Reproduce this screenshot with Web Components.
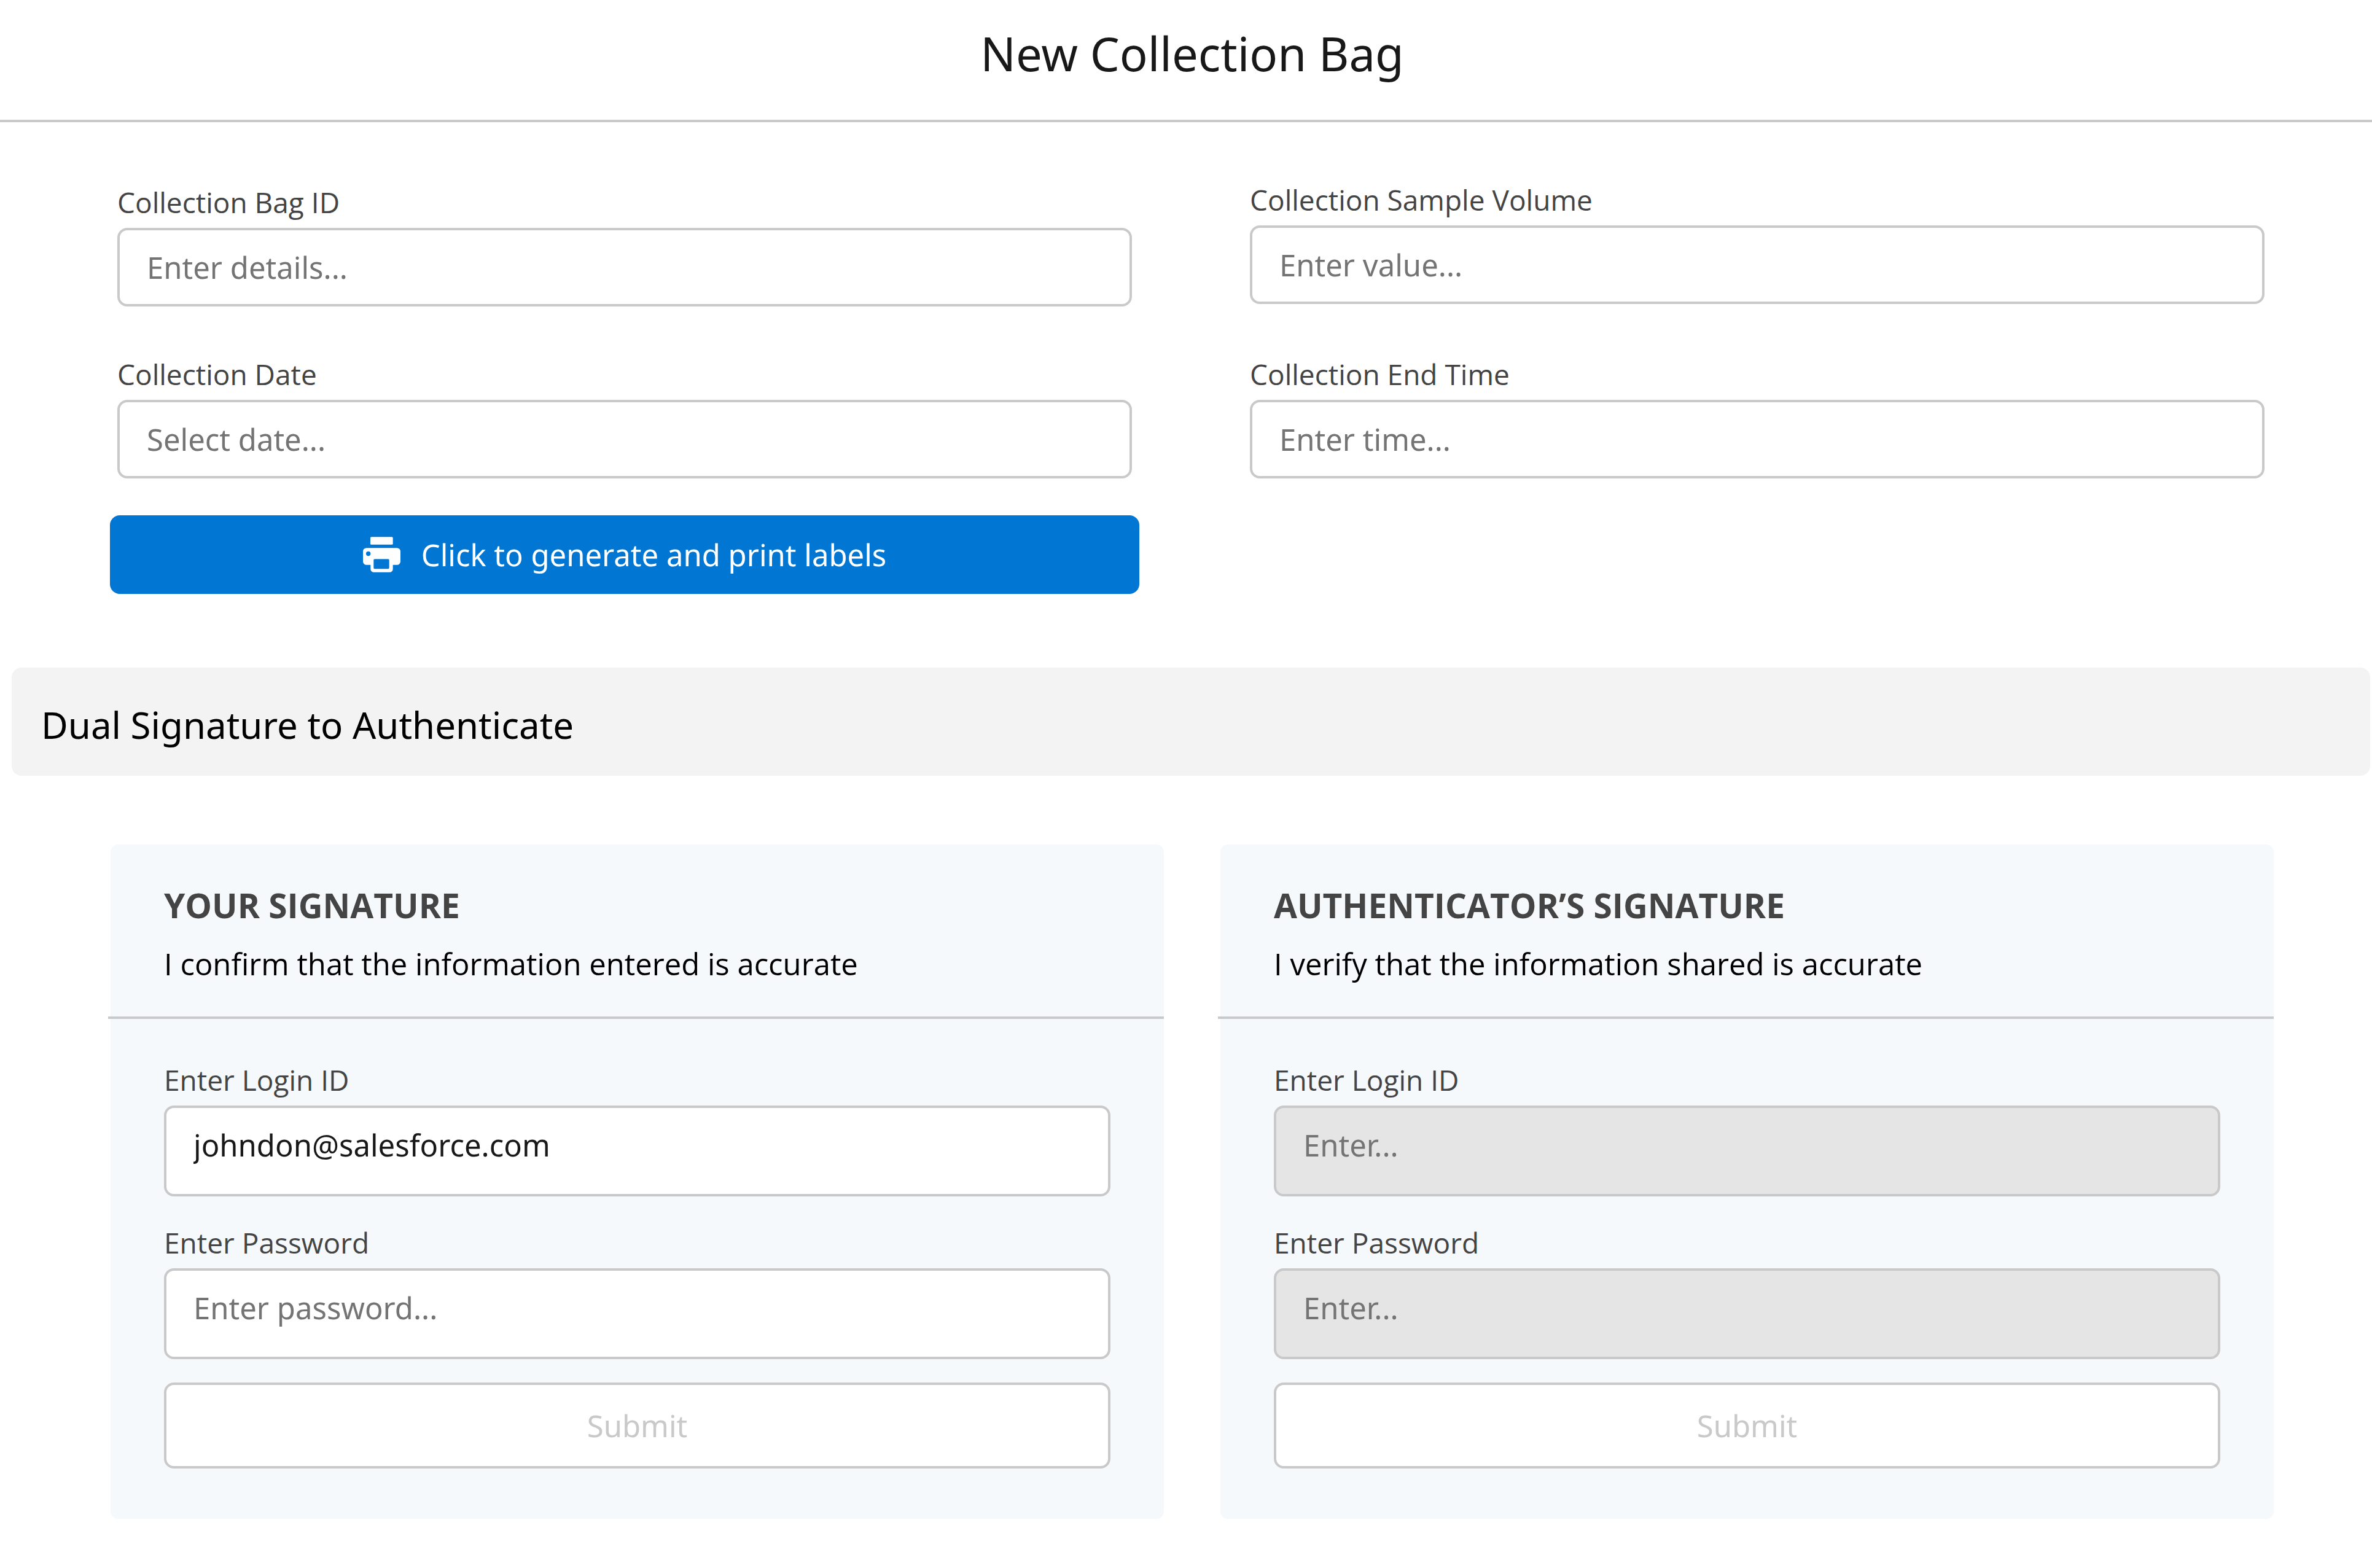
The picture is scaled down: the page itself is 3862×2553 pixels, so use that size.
<!DOCTYPE html>
<html lang="en">
<head>
<meta charset="utf-8">
<title>New Collection Bag</title>
<style>
  :root {
    --font-ui: "Noto Sans", "Open Sans", sans-serif;
    --font-label: "Open Sans", "Noto Sans", sans-serif;
    --line: #c9c9c9;
    --ink: #181818;
    --label: #444444;
    --hint: #747474;
    --brand: #0176d3;
    --radius: 16px;
  }
  body { margin: 0; background: #fff; font-family: var(--font-ui); color: var(--ink); }
</style>
</head>
<body>
<collection-page></collection-page>

<template id="page-header">
  <style>
    :host { display: block; border-bottom: 4px solid var(--line); }
    h1 { margin: 0; padding: 32px 0 53px 20px; font-size: 76px; line-height: 110px; font-weight: 400; text-align: center; }
  </style>
  <h1><slot></slot></h1>
</template>

<template id="form-field">
  <style>
    :host { display: flex; flex-direction: column; gap: 10px; }
    label { font-family: var(--font-label); font-size: 46px; line-height: 64px; color: var(--label); }
    input {
      box-sizing: border-box; width: 100%; height: 128px; margin: 0; padding: 0 44px;
      border: 4px solid var(--line); border-radius: var(--radius); background: #fff;
      font-family: var(--font-ui); font-size: 49px; color: var(--ink); outline: none;
    }
    :host([tall]) input { height: 148px; padding-bottom: 20px; }
    input::placeholder { color: var(--hint); opacity: 1; }
    input:disabled { background: #e5e5e5; }
  </style>
  <label for="control"></label>
  <input id="control">
</template>

<template id="print-button">
  <style>
    :host { display: block; }
    button {
      display: flex; align-items: center; justify-content: center; gap: 34px;
      width: 100%; height: 128px; padding: 0; border: 0; border-radius: var(--radius);
      background: var(--brand); color: #fff; font-family: var(--font-ui); font-size: 49px;
    }
    svg { width: 61px; height: 58px; }
  </style>
  <button type="button">
    <svg viewBox="0 0 183 173" fill="#fff" aria-hidden="true">
      <rect x="36" y="0" width="110" height="38" rx="5"/>
      <path fill-rule="evenodd" d="M17 54H166A17 17 0 0 1 183 71V120A17 17 0 0 1 166 137H146V157A16 16 0 0 1 130 173H53A16 16 0 0 1 37 157V137H17A17 17 0 0 1 0 120V71A17 17 0 0 1 17 54ZM26 71A11 11 0 1 0 26 93A11 11 0 1 0 26 71ZM57 108A5 5 0 0 0 52 113V151A5 5 0 0 0 57 156H123A5 5 0 0 0 128 151V113A5 5 0 0 0 123 108Z"/>
    </svg>
    <span><slot></slot></span>
  </button>
</template>

<template id="section-bar">
  <style>
    :host { display: block; margin: 0 3px 0 19px; padding: 49px 48px 39px; border-radius: var(--radius); background: #f3f3f3; }
    h2 { margin: 0; font-size: 60px; line-height: 88px; font-weight: 400; color: #000; }
  </style>
  <h2><slot></slot></h2>
</template>

<template id="signature-card">
  <style>
    :host { display: block; border-radius: 12px; background: #f5f9fc; }
    header { margin-left: -4px; padding: 62px 87px 52px 91px; border-bottom: 4px solid var(--line); font-family: var(--font-label); }
    h3 { margin: 0 0 24px; font-size: 55px; line-height: 74px; font-weight: 700; color: var(--label); }
    p { margin: 0; font-size: 49px; line-height: 68px; color: #000; }
    form { display: flex; flex-direction: column; gap: 43px; padding: 67px 87px 82px; }
    .last { display: flex; flex-direction: column; gap: 38px; }
    button {
      width: 100%; height: 140px; padding: 0; border: 4px solid var(--line); border-radius: var(--radius);
      background: #fff; color: var(--line); font-family: var(--font-ui); font-size: 49px;
    }
  </style>
  <header>
    <h3><slot name="title"></slot></h3>
    <p><slot name="statement"></slot></p>
  </header>
  <form>
    <slot name="login"></slot>
    <div class="last">
      <slot name="password"></slot>
      <button type="submit" disabled>Submit</button>
    </div>
  </form>
</template>

<template id="collection-page">
  <style>
    :host { display: block; padding-bottom: 80px; }
    .details { display: grid; grid-template-columns: 1fr 1fr; gap: 168px; padding: 0 163px 120px 179px; }
    .column { display: flex; flex-direction: column; gap: 60px; }
    .fields { display: flex; flex-direction: column; gap: 78px; padding: 98px 12px 0; }
    .fields.end { gap: 82px; padding-top: 94px; }
    .signatures { display: grid; grid-template-columns: 1fr 1fr; gap: 92px; padding: 112px 160px 0 180px; }
  </style>
  <page-header>New Collection Bag</page-header>
  <main>
    <section class="details">
      <div class="column">
        <div class="fields">
          <form-field label="Collection Bag ID" placeholder="Enter details..."></form-field>
          <form-field label="Collection Date" placeholder="Select date..."></form-field>
        </div>
        <print-button>Click to generate and print labels</print-button>
      </div>
      <div class="column">
        <div class="fields end">
          <form-field label="Collection Sample Volume" placeholder="Enter value..."></form-field>
          <form-field label="Collection End Time" placeholder="Enter time..."></form-field>
        </div>
      </div>
    </section>
    <section-bar>Dual Signature to Authenticate</section-bar>
    <section class="signatures">
      <signature-card>
        <span slot="title">YOUR SIGNATURE</span>
        <span slot="statement">I confirm that the information entered is accurate</span>
        <form-field slot="login" tall label="Enter Login ID" type="email" value="johndon@salesforce.com"></form-field>
        <form-field slot="password" tall label="Enter Password" type="password" placeholder="Enter password..."></form-field>
      </signature-card>
      <signature-card>
        <span slot="title">AUTHENTICATOR’S SIGNATURE</span>
        <span slot="statement">I verify that the information shared is accurate</span>
        <form-field slot="login" tall label="Enter Login ID" type="email" placeholder="Enter..." disabled></form-field>
        <form-field slot="password" tall label="Enter Password" type="password" placeholder="Enter..." disabled></form-field>
      </signature-card>
    </section>
  </main>
</template>

<script>
  class TemplateElement extends HTMLElement {
    constructor() {
      super();
      const template = document.getElementById(this.localName);
      this.attachShadow({ mode: "open" }).append(document.importNode(template.content, true));
    }
  }

  class FormField extends TemplateElement {
    connectedCallback() {
      const input = this.shadowRoot.querySelector("input");
      this.shadowRoot.querySelector("label").textContent = this.getAttribute("label");
      input.type = this.getAttribute("type") || "text";
      input.placeholder = this.getAttribute("placeholder") || "";
      input.value = this.getAttribute("value") || "";
      input.disabled = this.hasAttribute("disabled");
    }
  }

  customElements.define("page-header", class extends TemplateElement {});
  customElements.define("form-field", FormField);
  customElements.define("print-button", class extends TemplateElement {});
  customElements.define("section-bar", class extends TemplateElement {});
  customElements.define("signature-card", class extends TemplateElement {});
  customElements.define("collection-page", class extends TemplateElement {});
</script>
</body>
</html>
